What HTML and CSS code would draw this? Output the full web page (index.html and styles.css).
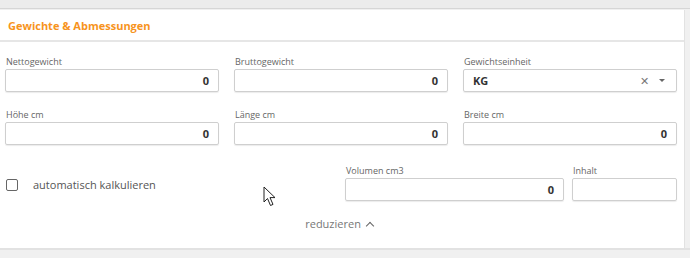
FILE: index.html
```html
<!DOCTYPE html>
<html lang="de">
<head>
  <meta charset="UTF-8">
  <title>Gewichte & Abmessungen</title>
  <link rel="stylesheet" href="styles.css">
</head>
<body>
  <div class="topbar"></div>
  <div class="panel">
    <div class="panel-head">Gewichte &amp; Abmessungen</div>
    <div class="panel-body">
      <div class="grid">
        <div class="field">
          <label>Nettogewicht</label>
          <div class="input num">0</div>
        </div>
        <div class="field">
          <label>Bruttogewicht</label>
          <div class="input num">0</div>
        </div>
        <div class="field">
          <label>Gewichtseinheit</label>
          <div class="input select">
            <span class="value">KG</span>
            <span class="clear">&#x2715;</span>
            <span class="caret"></span>
          </div>
        </div>
        <div class="field">
          <label>Höhe cm</label>
          <div class="input num">0</div>
        </div>
        <div class="field">
          <label>Länge cm</label>
          <div class="input num">0</div>
        </div>
        <div class="field">
          <label>Breite cm</label>
          <div class="input num">0</div>
        </div>
      </div>

      <div class="calc-row">
        <div class="check">
          <span class="box"></span>
          <span>automatisch kalkulieren</span>
        </div>
        <div class="field volume">
          <label>Volumen cm3</label>
          <div class="input num">0</div>
        </div>
        <div class="field content">
          <label>Inhalt</label>
          <div class="input num"></div>
        </div>
      </div>

      <div class="toggle">reduzieren <span class="chev"></span></div>
    </div>
  </div>
  <div class="bottombar"></div>

  <svg class="cursor" width="14" height="22" viewBox="0 0 14 22">
    <path d="M1 1 L1 16 L4.5 12.5 L7.5 19.5 L10 18.4 L7 11.6 L12 11.6 Z" fill="#fff" stroke="#222" stroke-width="1" stroke-linejoin="round"/>
  </svg>
</body>
</html>
```

FILE: styles.css
```css
body {
  margin: 0;
  font-family: "Open Sans", "Noto Sans", sans-serif;
  background-color: #f0f0f0;
  position: relative;
  height: 258px;
  overflow: hidden;
}
.topbar {
  height: 8px;
  background-color: #ececec;
  border-bottom: 1px solid #d6d6d6;
}
.panel {
  margin-top: 1px;
  background: #ffffff;
  margin-right: 5px;
  border-right: 1px solid #e2e2e2;
}
.panel-head {
  height: 30px;
  line-height: 32px;
  padding-left: 8px;
  font-size: 11px;
  font-weight: bold;
  color: #f7941d;
  border-bottom: 2px solid #e6e6e6;
}
.panel-body {
  padding: 13px 7px 0 5px;
  height: 206px;
  box-sizing: border-box;
}
.grid {
  display: grid;
  grid-template-columns: repeat(3, 1fr);
  column-gap: 15px;
  row-gap: 16px;
}
.field label {
  display: block;
  font-size: 9px;
  line-height: 13px;
  color: #666;
  margin-bottom: 1px;
  padding-left: 1px;
}
.input {
  height: 23px;
  border: 1px solid #cfcfcf;
  border-radius: 2px;
  box-shadow: 0 1px 1px rgba(0, 0, 0, 0.08);
  box-sizing: border-box;
  font-size: 11px;
  font-weight: bold;
  color: #333;
  line-height: 21px;
  padding: 0 9px;
}
.num {
  text-align: right;
}
.select {
  display: flex;
  align-items: center;
}
.select .value {
  flex: 1;
}
.select .clear {
  font-weight: normal;
  color: #777;
  font-size: 11px;
  margin-right: 10px;
}
.select .caret {
  width: 0;
  height: 0;
  border-left: 3px solid transparent;
  border-right: 3px solid transparent;
  border-top: 3px solid #666;
  margin-right: 2px;
}
.calc-row {
  display: flex;
  align-items: flex-end;
  margin-top: 19px;
}
.check {
  width: 340px;
  display: flex;
  align-items: flex-start;
  height: 23px;
  font-size: 11px;
  line-height: 14px;
  color: #555;
}
.check .box {
  width: 10px;
  height: 10px;
  border: 1.5px solid #666;
  border-radius: 2px;
  margin: 1px 15px 0 1px;
}
.volume {
  flex: 1;
  margin-right: 8px;
}
.content {
  width: 105px;
}
.toggle {
  text-align: center;
  margin-top: 15px;
  font-size: 11px;
  color: #777;
  padding-right: 4px;
}
.chev {
  display: inline-block;
  width: 5px;
  height: 5px;
  border-left: 1.5px solid #666;
  border-top: 1.5px solid #666;
  transform: rotate(45deg);
  margin-left: 3px;
  position: relative;
  top: 1px;
}
.bottombar {
  border-top: 2px solid #e2e2e2;
  height: 10px;
  background: #f0f0f0;
}
.cursor {
  position: absolute;
  left: 263px;
  top: 186px;
}
```
